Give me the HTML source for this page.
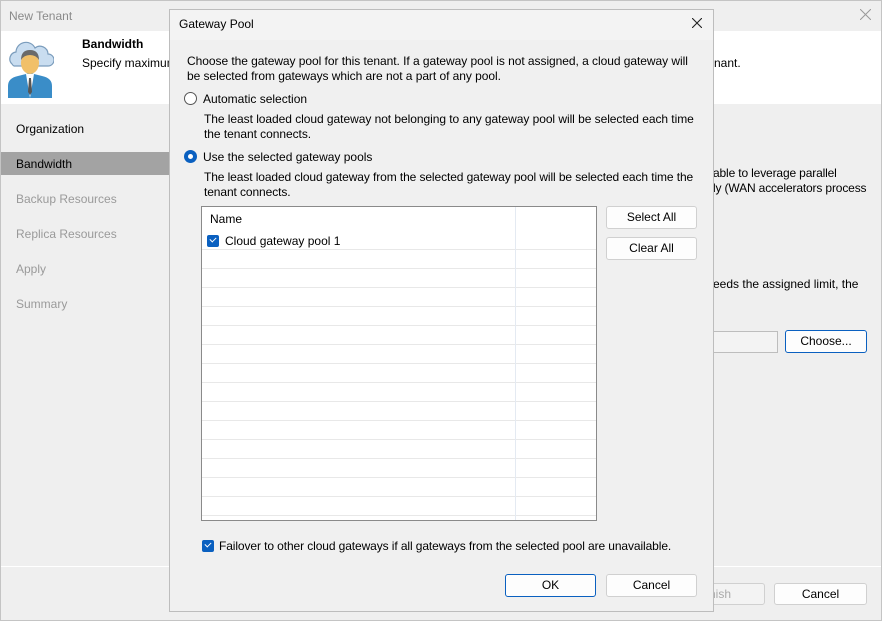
<!DOCTYPE html>
<html><head><style>
*{box-sizing:border-box;margin:0;padding:0}
body{width:882px;height:621px;background:#efefef;font-family:"Liberation Sans",sans-serif;font-size:12px;color:#000;position:relative;overflow:hidden}
.a{position:absolute;white-space:nowrap}
.btn{position:absolute;background:#fdfdfd;border:1px solid #d0d0d0;border-radius:3px;text-align:center;font-size:12px;line-height:20px}
.nav{position:absolute;left:16px;font-size:12px;color:#9a9a9a}
.cb{position:absolute;width:12px;height:12px;background:#0a60c0;border-radius:2px}
.cb:after{content:"";position:absolute;left:3px;top:2px;width:5px;height:3px;border-left:1px solid #fff;border-bottom:1px solid #fff;transform:rotate(-45deg)}
</style></head><body>
<div class="a" style="left:0;top:0;width:882px;height:621px;border:1px solid #c4c4c4"></div>
<div class="a" style="left:9px;top:9px;color:#8a8a8a;font-size:12px">New Tenant</div>
<svg class="a" style="left:860px;top:9px" width="11" height="11"><path d="M0 0L11 11M11 0L0 11" stroke="#999" stroke-width="1"/></svg>
<div class="a" style="left:1px;top:31px;width:880px;height:73px;background:#fff"></div>
<svg class="a" style="left:6px;top:36px" width="48" height="62" viewBox="0 0 48 62">
<path d="M6 28 a7 7 0 0 1 4-12 a10 10 0 0 1 19-4 a8 8 0 0 1 13 6 a6 6 0 0 1 0 12 H8 a5 5 0 0 1-2-2z" fill="#c9ddf0" stroke="#7a9cbc" stroke-width="1.2"/>
<path d="M2 62 V50 q0-8 10-10 l12-3 12 3 q10 2 10 10 V62z" fill="#3a8dc8"/>
<path d="M20 38 h8 l-4 24z" fill="#fff"/><path d="M23 42 h2 l1 14 -2 3 -2-3z" fill="#555"/>
<ellipse cx="24" cy="27" rx="9" ry="11" fill="#f1c069"/>
<path d="M15 24 q0-10 9-10 q9 0 9 10 q-3-5-9-5 q-6 0-9 5z" fill="#6a6a6a"/>
</svg>
<div class="a" style="left:82px;top:37px;font-weight:bold">Bandwidth</div>
<div class="a" style="left:82px;top:56px">Specify maximum</div>
<div class="a" style="left:714px;top:56px">nant.</div>
<div class="nav" style="top:122px;color:#000">Organization</div>
<div class="a" style="left:1px;top:152px;width:168px;height:23px;background:#a3a3a3"></div>
<div class="nav" style="top:157px;color:#000">Bandwidth</div>
<div class="nav" style="top:192px">Backup Resources</div>
<div class="nav" style="top:227px">Replica Resources</div>
<div class="nav" style="top:262px">Apply</div>
<div class="nav" style="top:297px">Summary</div>
<div class="a" style="left:713px;top:166px;line-height:15px;letter-spacing:-0.15px">able to leverage parallel<br>ly (WAN accelerators process</div>
<div class="a" style="left:713px;top:277px">eeds the assigned limit, the</div>
<div class="a" style="left:713px;top:331px;width:65px;height:22px;border:1px solid #bdbdbd;border-left:none;background:#f3f3f3"></div>
<div class="btn" style="left:785px;top:330px;width:82px;height:23px;border-color:#0a60c0">Choose...</div>
<div class="a" style="left:1px;top:566px;width:880px;height:1px;background:#fff"></div>
<div class="btn" style="left:707px;top:583px;width:58px;height:22px;color:#aaa;background:#f3f3f3;text-align:left;padding-left:1px">nish</div>
<div class="btn" style="left:774px;top:583px;width:93px;height:22px">Cancel</div>

<div class="a" style="left:169px;top:9px;width:545px;height:603px;background:#f0f0f0;border:1px solid #bdbdbd"></div>
<div class="a" style="left:170px;top:10px;width:543px;height:30px;background:#f3f3f3"></div>
<div class="a" style="left:179px;top:17px">Gateway Pool</div>
<svg class="a" style="left:692px;top:18px" width="10" height="10"><path d="M0 0L10 10M10 0L0 10" stroke="#222" stroke-width="1.1"/></svg>
<div class="a" style="left:187px;top:54px;line-height:15px;letter-spacing:-0.05px">Choose the gateway pool for this tenant. If a gateway pool is not assigned, a cloud gateway will<br>be selected from gateways which are not a part of any pool.</div>
<div class="a" style="left:184px;top:92px;width:13px;height:13px;border:1px solid #555;border-radius:50%;background:#fff"></div>
<div class="a" style="left:203px;top:92px">Automatic selection</div>
<div class="a" style="left:204px;top:112px;line-height:15px;letter-spacing:-0.05px">The least loaded cloud gateway not belonging to any gateway pool will be selected each time<br>the tenant connects.</div>
<div class="a" style="left:184px;top:150px;width:13px;height:13px;border-radius:50%;background:#0a60c0"></div>
<div class="a" style="left:188px;top:154px;width:5px;height:5px;border-radius:50%;background:#fff"></div>
<div class="a" style="left:203px;top:150px">Use the selected gateway pools</div>
<div class="a" style="left:204px;top:170px;line-height:15px;letter-spacing:-0.1px">The least loaded cloud gateway from the selected gateway pool will be selected each time the<br>tenant connects.</div>
<div class="a" style="left:201px;top:206px;width:396px;height:315px;background:#fff;border:1px solid #8a8a8a"></div>
<div class="a" style="left:202px;top:249px;width:394px;height:271px;background-image:repeating-linear-gradient(to bottom,#e8e8e8 0,#e8e8e8 1px,transparent 1px,transparent 19px)"></div>
<div class="a" style="left:515px;top:207px;width:1px;height:313px;background:#e4eaf2"></div>
<div class="a" style="left:210px;top:212px">Name</div>
<div class="cb" style="left:207px;top:235px"></div>
<div class="a" style="left:225px;top:234px">Cloud gateway pool 1</div>
<div class="btn" style="left:606px;top:206px;width:91px;height:23px">Select All</div>
<div class="btn" style="left:606px;top:237px;width:91px;height:23px">Clear All</div>
<div class="cb" style="left:202px;top:540px"></div>
<div class="a" style="left:219px;top:539px;letter-spacing:-0.1px">Failover to other cloud gateways if all gateways from the selected pool are unavailable.</div>
<div class="btn" style="left:505px;top:574px;width:91px;height:23px;border-color:#0a60c0">OK</div>
<div class="btn" style="left:606px;top:574px;width:91px;height:23px">Cancel</div>
</body></html>
